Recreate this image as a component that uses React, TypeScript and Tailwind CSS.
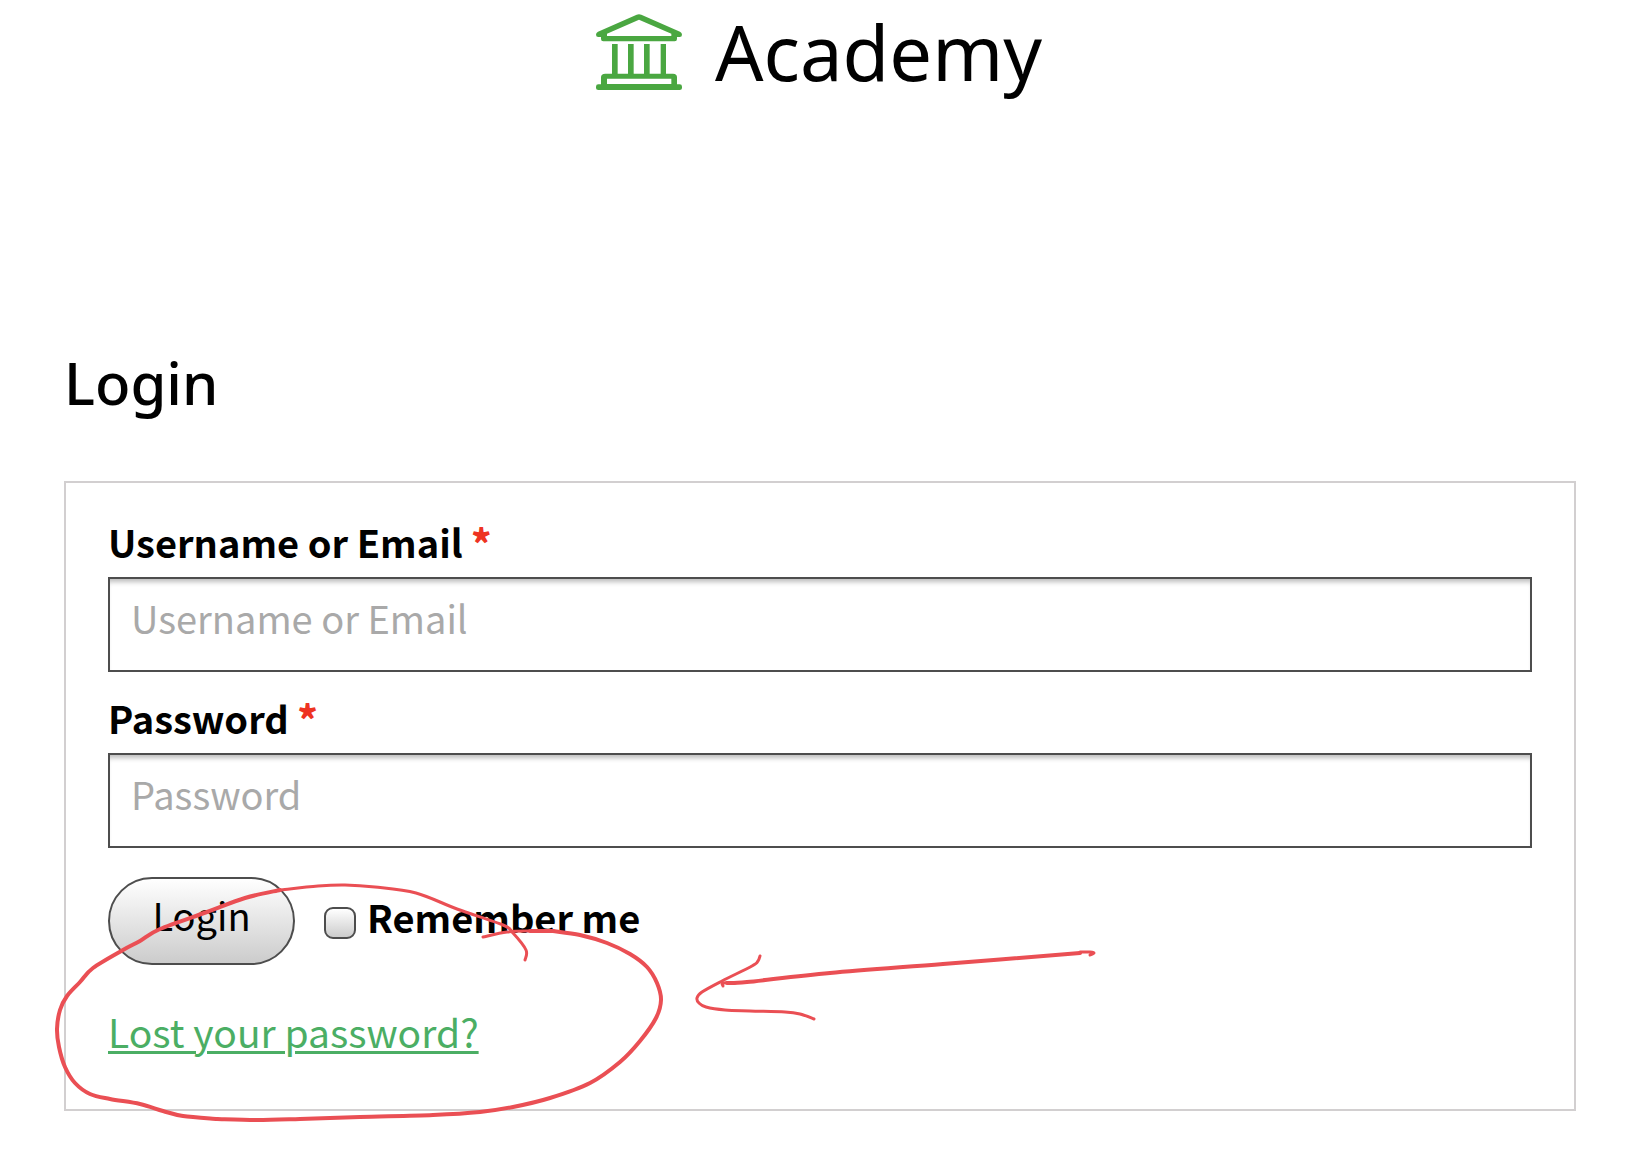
import React from "react";

type Point = [number, number];

const INK = "#ea4f54";

// Catmull-Rom spline through the points, written as cubic Béziers.
function smooth(points: Point[]): string {
  let d = `M${points[0][0]} ${points[0][1]}`;
  for (let i = 0; i < points.length - 1; i++) {
    const p0 = points[Math.max(i - 1, 0)];
    const p1 = points[i];
    const p2 = points[i + 1];
    const p3 = points[Math.min(i + 2, points.length - 1)];
    d += `C${p1[0] + (p2[0] - p0[0]) / 6} ${p1[1] + (p2[1] - p0[1]) / 6} ${p2[0] - (p3[0] - p1[0]) / 6} ${p2[1] - (p3[1] - p1[1]) / 6} ${p2[0]} ${p2[1]}`;
  }
  return d;
}

const strokes: { width: number; points: Point[] }[] = [
  {
    width: 3,
    points: [[525, 960], [526, 950], [513, 933], [503, 925], [457, 909], [416, 893], [375, 887], [345, 885], [318, 886], [280, 890]],
  },
  {
    width: 4,
    points: [[280, 890], [245, 898], [207, 912], [160, 929], [140, 941], [123, 950], [93, 968], [80, 982], [67, 996], [60, 1010], [57, 1029], [59, 1047], [65, 1067], [75, 1083], [90, 1094], [110, 1099], [140, 1104], [163, 1111], [183, 1116], [217, 1119]],
  },
  {
    width: 4,
    points: [[217, 1119], [257, 1120], [300, 1119], [360, 1117], [433, 1115], [480, 1112], [513, 1107], [550, 1098], [590, 1083], [620, 1062], [640, 1041], [656, 1018], [661, 1000], [657, 983], [647, 967], [630, 954], [607, 943], [580, 935], [553, 931]],
  },
  { width: 4, points: [[553, 931], [540, 931], [530, 931]] },
  { width: 3, points: [[530, 931], [507, 932], [483, 937]] },
  {
    width: 3,
    points: [[760, 956], [758, 961], [752, 966], [722, 981], [702, 992], [697, 998], [699, 1003], [706, 1007], [725, 1010], [750, 1011], [785, 1012], [800, 1014], [814, 1019]],
  },
  {
    width: 4,
    points: [[727, 983], [747, 982], [830, 973], [943, 964], [1080, 953]],
  },
  { width: 3, points: [[723, 986], [723, 983], [735, 983]] },
  { width: 3, points: [[1080, 952], [1090, 952], [1094, 953], [1090, 955]] },
];

function Annotation() {
  return (
    <svg
      className="pointer-events-none absolute left-0 top-0"
      width="1120"
      height="1140"
      viewBox="0 0 1120 1140"
      fill="none"
      stroke={INK}
      strokeLinecap="round"
      strokeLinejoin="round"
      aria-hidden="true"
    >
      {strokes.map((s, i) => (
        <path key={i} d={smooth(s.points)} strokeWidth={s.width} />
      ))}
    </svg>
  );
}

function Logo() {
  return (
    <svg className="h-[76px] w-[86px] shrink-0" viewBox="0 0 258 228" fill="#4aa741" aria-hidden="true">
      <path
        fillRule="evenodd"
        d="M122 2Q129 -1 136 2L252 53Q258 56 258 62Q258 69 251 69H243V75Q243 82 236 82H22Q15 82 15 75V69H7Q0 69 0 62Q0 56 6 53ZM129 17L33 59V66H226V59Z"
      />
      <path d="M48 90H65V182H48ZM96 90H113V182H96ZM144 90H161V182H144ZM194 90H210V182H194Z" />
      <path
        fillRule="evenodd"
        d="M28 179H231Q243 179 243 190V211H251Q258 211 258 218V222Q258 228 251 228H7Q0 228 0 222V218Q0 211 7 211H15V190Q15 179 28 179ZM33 194V210H226V194Z"
      />
    </svg>
  );
}

function Field({ id, label, type }: { id: string; label: string; type: string }) {
  return (
    <div>
      <label htmlFor={id} className="block font-bold">
        {label} <span className="font-black text-[#ee3322]">*</span>
      </label>
      <input
        id={id}
        type={type}
        placeholder={label}
        className="mt-[11px] block h-[95px] w-full border-2 border-[#4d4d4d] bg-white px-[21px] pb-3.5 shadow-[inset_0_6px_5px_-3px_#bdbdbd] outline-none placeholder:text-[#a9a9a9]"
      />
    </div>
  );
}

export default function App() {
  return (
    <div className="relative min-h-screen bg-white font-['Noto_Sans_CJK_SC',sans-serif] text-[38px] leading-[48px] text-black">
      <header className="flex items-center justify-center gap-[33px] pr-3.5 font-['Noto_Sans',sans-serif]">
        <Logo />
        <span className="text-[76px] leading-[104px]">Academy</span>
      </header>

      <main className="mx-16 pt-[244px] pr-3">
        <h1 className="font-['Noto_Sans',sans-serif] text-[58px] font-medium leading-[70px]">Login</h1>
        <form
          className="mt-[63px] border-2 border-[#d2cfd0] px-[42px] pb-[54px] pt-[35px]"
          onSubmit={(e: React.FormEvent) => e.preventDefault()}
        >
          <div className="flex flex-col gap-[22px]">
            <Field id="username" label="Username or Email" type="text" />
            <Field id="password" label="Password" type="password" />
          </div>
          <div className="mt-[29px] flex items-center">
            <button
              type="submit"
              className="h-[88px] w-[187px] rounded-[44px] border-2 border-[#4d4d4d] bg-linear-to-b from-white to-[#cccccc] pb-3"
            >
              Login
            </button>
            <input
              id="remember"
              type="checkbox"
              className="ml-[29px] mt-1 size-8 appearance-none rounded-[9px] border-2 border-[#4d4d4d] bg-linear-to-b from-white to-[#cccccc]"
            />
            <label htmlFor="remember" className="pb-2 pl-[11px] font-bold">
              Remember me
            </label>
          </div>
          <a
            href="#lost-password"
            className="mt-[42px] inline-block align-top text-[39px] text-[#4bae64] underline decoration-[3px] underline-offset-3"
          >
            Lost your password?
          </a>
        </form>
      </main>

      <Annotation />
    </div>
  );
}
